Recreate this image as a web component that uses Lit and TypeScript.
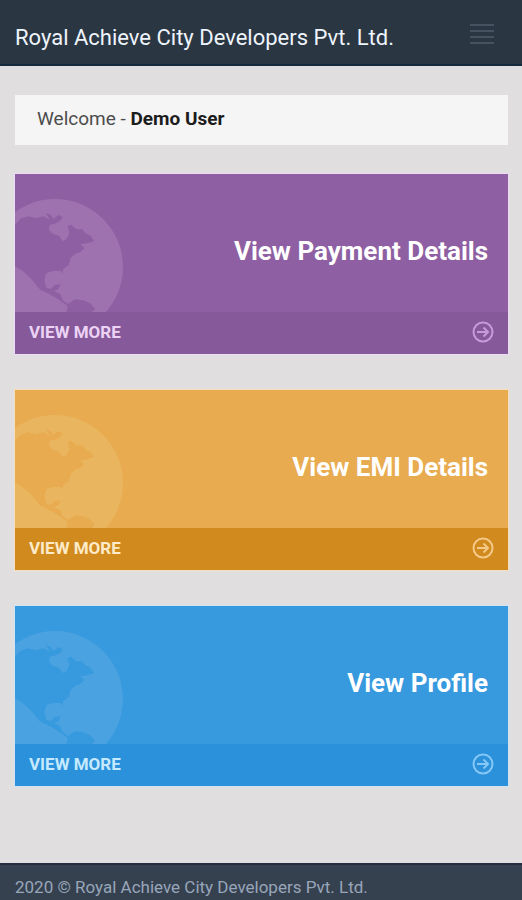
import { LitElement, html, css } from "lit";
import { customElement, property } from "lit/decorators.js";

@customElement("stat-card")
class StatCard extends LitElement {
  @property() heading = "";
  @property({ reflect: true }) tone = "purple";

  static styles = css`
    :host {
      display: block;
      --base: #8e5fa2;
      --foot: #865a9a;
      --tint: #9d72af;
      --label: #ecd3f5;
      --icon: #c79bd8;
      --edge: #ecdcf1;
    }
    :host([tone="orange"]) {
      --base: #e8ab4f;
      --foot: #d08a1d;
      --tint: #eab55f;
      --label: #fdebc9;
      --icon: #f5c988;
      --edge: #f3dfc2;
    }
    :host([tone="blue"]) {
      --base: #3799de;
      --foot: #2b91db;
      --tint: #4aa2e0;
      --label: #c5eaff;
      --icon: #85c7f5;
      --edge: #d3e3f2;
    }
    .card {
      position: relative;
      display: flex;
      flex-direction: column;
      overflow: hidden;
      background: var(--base);
      box-shadow: 0 0 1px 1px var(--edge);
      color: #fff;
      text-decoration: none;
    }
    .globe {
      position: absolute;
      left: 0;
      top: 0;
      width: 120px;
      height: 180px;
      fill: var(--tint);
    }
    .heading {
      position: relative;
      margin: 0;
      padding: 61px 20px 45px;
      font-size: 26px;
      line-height: 32px;
      font-weight: 700;
      text-align: right;
    }
    .more {
      position: relative;
      display: flex;
      align-items: center;
      justify-content: space-between;
      padding: 9px 14px 11px;
      background: var(--foot);
      color: var(--label);
      font-size: 17px;
      line-height: 22px;
      font-weight: 700;
    }
    .arrow {
      width: 22px;
      height: 22px;
      fill: none;
      stroke: var(--icon);
      stroke-width: 2;
    }
  `;

  render() {
    return html`
      <a class="card" href="#">
        <svg class="globe" viewBox="45 28 360 540" aria-hidden="true">
          <path
            fill-rule="evenodd"
            d="M165 103a204 204 0 1 1 0 408a204 204 0 1 1 0-408z
            M30 190L50 175L62 162L84 155L110 161L130 155L149 166L145 157L137 145L151 150L160 163L175 151L188 157L181 169L164 177L150 180L146 194L158 207L177 213L188 229L199 224L208 206L203 184L214 180L229 194L247 194L256 206L271 213L283 229L262 236L241 239L253 250L240 263L226 267L212 280L206 301L190 313L186 328L183 319L160 319L139 325L133 345L139 369L153 373L164 361L181 359L176 373L162 379L181 389L188 406L204 418L225 404L250 407L271 416L285 433L272 445L315 475L290 511L190 511L200 440L203 424L186 411L164 397L138 383L121 375L107 359L92 340L67 318L48 307L30 290z"
          ></path>
        </svg>
        <h2 class="heading">${this.heading}</h2>
        <span class="more">
          VIEW MORE
          <svg class="arrow" viewBox="0 0 22 22" aria-hidden="true">
            <circle cx="11" cy="11" r="9.5"></circle>
            <path d="M5 11H16M11.5 6.5L16 11L11.5 15.5"></path>
          </svg>
        </span>
      </a>
    `;
  }
}

@customElement("app-root")
class AppRoot extends LitElement {
  static styles = css`
    :host {
      display: flex;
      flex-direction: column;
      min-height: 100vh;
      background: #e0dedf;
      font-family: Roboto, "Liberation Sans", sans-serif;
    }
    .header {
      display: flex;
      align-items: center;
      justify-content: space-between;
      padding: 8px 28px 0 15px;
      height: 56px;
      background: #2b3643;
      border-bottom: 2px solid #142a3c;
      color: #eef4fb;
    }
    .brand {
      margin: 0;
      padding-top: 4px;
      font-size: 22px;
      line-height: 28px;
      font-weight: 400;
    }
    .menu {
      display: flex;
      flex-direction: column;
      gap: 4px;
      padding: 0;
      margin-bottom: 4px;
      border: 0;
      background: none;
    }
    .bar {
      width: 24px;
      height: 2px;
      background: #465260;
    }
    .content {
      flex: 1;
      display: flex;
      flex-direction: column;
      gap: 36px;
      padding: 29px 14px 36px 15px;
    }
    .welcome {
      margin: 0 0 -7px;
      padding: 12px 22px 14px;
      background: #f5f5f5;
      color: #4c4c4c;
      font-size: 19px;
      line-height: 24px;
    }
    .user {
      color: #1c1c1c;
    }
    .footer {
      padding: 11px 15px 2px;
      background: #364150;
      border-top: 2px solid #272c40;
      color: #98a6ba;
      font-size: 17px;
      line-height: 22px;
    }
  `;

  render() {
    return html`
      <header class="header">
        <h1 class="brand">Royal Achieve City Developers Pvt. Ltd.</h1>
        <button class="menu" aria-label="Menu">
          <span class="bar"></span><span class="bar"></span><span class="bar"></span><span class="bar"></span>
        </button>
      </header>
      <main class="content">
        <p class="welcome">Welcome - <b class="user">Demo User</b></p>
        <stat-card tone="purple" heading="View Payment Details"></stat-card>
        <stat-card tone="orange" heading="View EMI Details"></stat-card>
        <stat-card tone="blue" heading="View Profile"></stat-card>
      </main>
      <footer class="footer">2020 © Royal Achieve City Developers Pvt. Ltd.</footer>
    `;
  }
}
